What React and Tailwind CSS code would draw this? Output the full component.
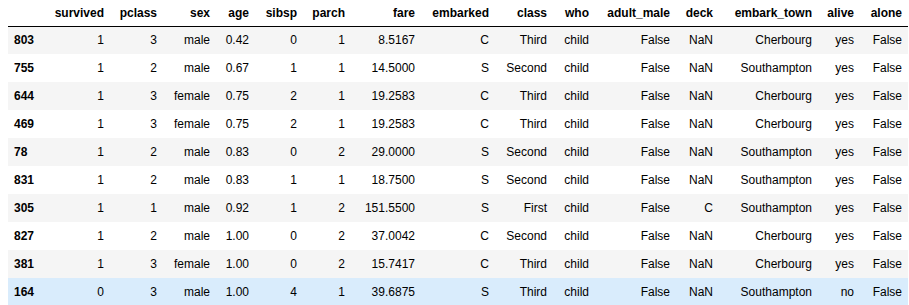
const columns = [
  { key: "survived", w: "w-[67px]" },
  { key: "pclass", w: "w-[53px]" },
  { key: "sex", w: "w-[53px]" },
  { key: "age", w: "w-[39px]" },
  { key: "sibsp", w: "w-[48px]" },
  { key: "parch", w: "w-[48px]" },
  { key: "fare", w: "w-[70px]" },
  { key: "embarked", w: "w-[74px]" },
  { key: "class", w: "w-[58px]" },
  { key: "who", w: "w-[42px]" },
  { key: "adult_male", w: "w-[81px]" },
  { key: "deck", w: "w-[43px]" },
  { key: "embark_town", w: "w-[99px]" },
  { key: "alive", w: "w-[42px]" },
  { key: "alone", w: "w-[48px]" },
];

const rows = [
  ["803", 1, 3, "male", "0.42", 0, 1, "8.5167", "C", "Third", "child", "False", "NaN", "Cherbourg", "yes", "False"],
  ["755", 1, 2, "male", "0.67", 1, 1, "14.5000", "S", "Second", "child", "False", "NaN", "Southampton", "yes", "False"],
  ["644", 1, 3, "female", "0.75", 2, 1, "19.2583", "C", "Third", "child", "False", "NaN", "Cherbourg", "yes", "False"],
  ["469", 1, 3, "female", "0.75", 2, 1, "19.2583", "C", "Third", "child", "False", "NaN", "Cherbourg", "yes", "False"],
  ["78", 1, 2, "male", "0.83", 0, 2, "29.0000", "S", "Second", "child", "False", "NaN", "Southampton", "yes", "False"],
  ["831", 1, 2, "male", "0.83", 1, 1, "18.7500", "S", "Second", "child", "False", "NaN", "Southampton", "yes", "False"],
  ["305", 1, 1, "male", "0.92", 1, 2, "151.5500", "S", "First", "child", "False", "C", "Southampton", "yes", "False"],
  ["827", 1, 2, "male", "1.00", 0, 2, "37.0042", "C", "Second", "child", "False", "NaN", "Cherbourg", "yes", "False"],
  ["381", 1, 3, "female", "1.00", 0, 2, "15.7417", "C", "Third", "child", "False", "NaN", "Cherbourg", "yes", "False"],
  ["164", 0, 3, "male", "1.00", 4, 1, "39.6875", "S", "Third", "child", "False", "NaN", "Southampton", "no", "False"],
];

export default function App() {
  return (
    <div className="bg-white w-[909px] h-[305px] overflow-hidden pl-[8px] font-['Liberation_Sans',Arial,sans-serif] text-[12px] text-black">
      <table className="table-fixed border-collapse w-[900px]">
        <thead>
          <tr className="h-[26px] border-b border-black">
            <th className="w-[35px]"></th>
            {columns.map((c) => (
              <th key={c.key} className={`${c.w} text-right font-bold px-[6px] align-middle`}>
                {c.key}
              </th>
            ))}
          </tr>
        </thead>
        <tbody>
          {rows.map((r, idx) => (
            <tr
              key={r[0]}
              className={`h-[28px] ${
                idx === 9 ? "bg-[#d9ecfc]" : idx % 2 === 0 ? "bg-[#f5f5f5]" : "bg-white"
              }`}
            >
              <th className="text-left font-bold px-[6px]">{r[0]}</th>
              {r.slice(1).map((v, i) => (
                <td key={i} className="text-right px-[6px] whitespace-nowrap">
                  {v}
                </td>
              ))}
            </tr>
          ))}
        </tbody>
      </table>
    </div>
  );
}
